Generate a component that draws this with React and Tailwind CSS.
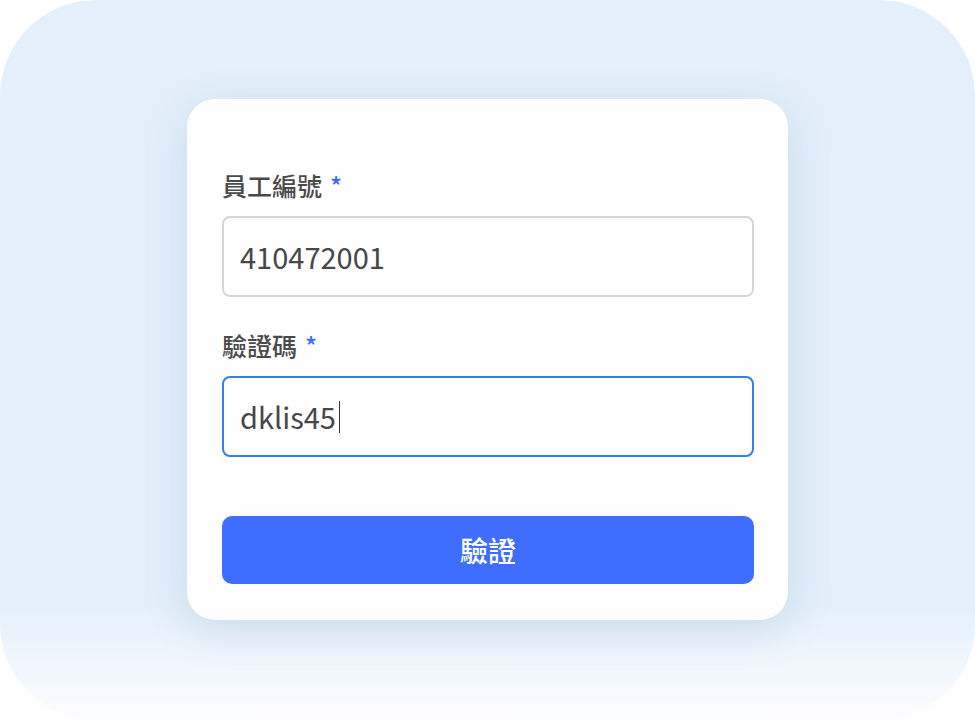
export default function App() {
  return (
    <div
      className="w-[975px] h-[720px] bg-white overflow-hidden"
      style={{ fontFamily: '"Noto Sans CJK TC", "Noto Sans", sans-serif' }}
    >
      <div className="w-full h-full rounded-[96px] bg-[linear-gradient(to_bottom,#e3f0fb_0%,#e3f0fb_84%,#fdfdff_100%)] flex justify-center pt-[99px]">
        <div className="w-[601px] h-[521px] rounded-[28px] bg-[#fefeff] shadow-[0_10px_40px_rgba(120,150,190,0.24)] pl-[35px] pr-[34px] pt-[70px] pb-[36px] flex flex-col">
          <label className="text-[25px] leading-[32px] font-medium text-[#4a4a4a]">
            員工編號<span className="ml-[8px] text-[#3d6cf5]">*</span>
          </label>
          <div className="mt-[15px] h-[81px] rounded-[8px] border-2 border-[#d6d6d6] flex items-center px-[16px] text-[29px] text-[#474747]">
            410472001
          </div>

          <label className="mt-[32px] text-[25px] leading-[32px] font-medium text-[#4a4a4a]">
            驗證碼<span className="ml-[8px] text-[#3d6cf5]">*</span>
          </label>
          <div className="mt-[15px] h-[81px] rounded-[8px] border-2 border-[#2f80ed] flex items-center px-[16px] text-[29px] text-[#474747]">
            dklis45<span className="ml-[3px] w-[1.5px] h-[32px] bg-[#333]" />
          </div>

          <button className="mt-[59px] h-[68px] rounded-[10px] bg-[#3e6dff] text-white text-[28px] font-medium">
            驗證
          </button>
        </div>
      </div>
    </div>
  );
}
